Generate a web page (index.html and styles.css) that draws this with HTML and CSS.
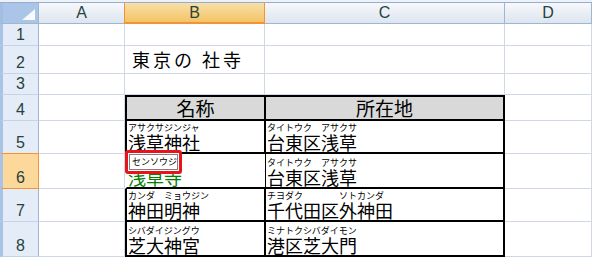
FILE: index.html
```html
<!DOCTYPE html>
<html lang="ja">
<head>
    <meta charset="UTF-8">
    <title>東京の社寺</title>
    <link rel="stylesheet" href="styles.css">
</head>
<body>

    <div class="topbar"></div>

    <div class="sheet">
        <!-- column headers -->
        <div class="corner"><div class="tri"></div></div>
        <div class="ch">A</div>
        <div class="ch sel">B</div>
        <div class="ch">C</div>
        <div class="ch">D</div>

        <!-- row 1 -->
        <div class="rh">1</div>
        <div class="c"></div>
        <div class="c"></div>
        <div class="c"></div>
        <div class="c"></div>

        <!-- row 2 -->
        <div class="rh">2</div>
        <div class="c"></div>
        <div class="c title">東京の 社寺</div>
        <div class="c"></div>
        <div class="c"></div>

        <!-- row 3 -->
        <div class="rh">3</div>
        <div class="c"></div>
        <div class="c"></div>
        <div class="c"></div>
        <div class="c"></div>

        <!-- row 4 -->
        <div class="rh">4</div>
        <div class="c"></div>
        <div class="c tb top head">名称</div>
        <div class="c tc top head">所在地</div>
        <div class="c"></div>

        <!-- row 5 -->
        <div class="rh">5</div>
        <div class="c"></div>
        <div class="c tb">
            <div class="tx">
                <span class="w"><span class="rb">アサクサジンジャ</span><span class="kj">浅草神社</span></span>
            </div>
        </div>
        <div class="c tc">
            <div class="tx">
                <span class="w"><span class="rb">タイトウク</span><span class="kj">台東区</span></span>
                <span class="w"><span class="rb">アサクサ</span><span class="kj">浅草</span></span>
            </div>
        </div>
        <div class="c"></div>

        <!-- row 6 (B6 being edited) -->
        <div class="rh rsel">6</div>
        <div class="c"></div>
        <div class="c tb edit">
            <div class="tx">
                <span class="w"><span class="kj green">浅草寺</span></span>
            </div>
            <div class="callout"><div class="phonetic">センソウジ</div></div>
        </div>
        <div class="c tc thin">
            <div class="tx">
                <span class="w"><span class="rb">タイトウク</span><span class="kj">台東区</span></span>
                <span class="w"><span class="rb">アサクサ</span><span class="kj">浅草</span></span>
            </div>
        </div>
        <div class="c"></div>

        <!-- row 7 -->
        <div class="rh">7</div>
        <div class="c"></div>
        <div class="c tb">
            <div class="tx">
                <span class="w"><span class="rb">カンダ</span><span class="kj">神田</span></span>
                <span class="w"><span class="rb">ミョウジン</span><span class="kj">明神</span></span>
            </div>
        </div>
        <div class="c tc">
            <div class="tx">
                <span class="w"><span class="rb">チヨダク</span><span class="kj">千代田区</span></span>
                <span class="w"><span class="rb">ソトカンダ</span><span class="kj">外神田</span></span>
            </div>
        </div>
        <div class="c"></div>

        <!-- row 8 -->
        <div class="rh">8</div>
        <div class="c"></div>
        <div class="c tb">
            <div class="tx">
                <span class="w"><span class="rb">シバダイジングウ</span><span class="kj">芝大神宮</span></span>
            </div>
        </div>
        <div class="c tc">
            <div class="tx">
                <span class="w"><span class="rb">ミナトク</span><span class="kj">港区</span></span>
                <span class="w"><span class="rb">シバダイモン</span><span class="kj">芝大門</span></span>
            </div>
        </div>
        <div class="c"></div>
    </div>

</body>
</html>
```

FILE: styles.css
```css
/* General */
body {
    margin: 0;
    background: #fff;
    font-family: "Noto Sans CJK JP", sans-serif;
    color: #000;
    overflow: hidden;
}

* {
    box-sizing: border-box;
}

/* Strip above the headers */
.topbar {
    height: 3px;
    background: #eef1f6;
    border-bottom: 1px solid #92afd3;
}

/* Grid */
.sheet {
    display: grid;
    grid-template-columns: 39px 86px 140px 240px 87px;
    grid-template-rows: 21px 22px 28px 21px 26px 33px 35px 33px 35px;
}

/* Select-all corner */
.corner {
    background: #abc5e8;
    border-left: 3px solid #a3bee3;
    border-right: 1px solid #9eb6ce;
    border-bottom: 1px solid #9eb6ce;
    display: flex;
    justify-content: flex-end;
    align-items: flex-end;
    padding: 0 3px 3px 0;
}

.tri {
    width: 13px;
    height: 11px;
    background: linear-gradient(135deg, #e8eef6, #ffffff);
    clip-path: polygon(100% 0, 100% 100%, 0 100%);
}

/* Column headers */
.ch {
    background: linear-gradient(#f6f8fb, #dde5f0);
    border-right: 1px solid #9eb6ce;
    border-bottom: 1px solid #9eb6ce;
    font-family: "Liberation Sans", sans-serif;
    font-size: 16px;
    color: #27413e;
    text-align: center;
    line-height: 20px;
}

.ch.sel {
    background: linear-gradient(#f9dfa8, #f3c466);
    border-left: 1px solid #f29436;
    border-right: 1px solid #f29436;
    border-bottom: 2px solid #f29436;
    margin-left: -1px;
}

/* Row headers */
.rh {
    background: #e4ecf7;
    border-left: 3px solid #a9c3e6;
    border-right: 1px solid #9eb6ce;
    border-bottom: 1px solid #c5d3e6;
    font-family: "Liberation Sans", sans-serif;
    font-size: 16px;
    color: #27413e;
    display: flex;
    justify-content: center;
    align-items: flex-end;
    padding-bottom: 1px;
}

.rh.rsel {
    background: #fdd89b;
    border-right: 1px solid #f29436;
    border-bottom: 1px solid #f29436;
    border-top: 1px solid #f29436;
    margin-top: -1px;
}

/* Cells */
.c {
    border-right: 1px solid #d0d7e5;
    border-bottom: 1px solid #d0d7e5;
}

.title {
    font-size: 18px;
    letter-spacing: 3px;
    padding-left: 7px;
    display: flex;
    align-items: flex-end;
    padding-bottom: 1px;
}

/* Table */
.tb {
    border-left: 2px solid #000;
    border-right: 1px solid #000;
    border-bottom: 2px solid #000;
}

.tc {
    border-left: 1px solid #000;
    border-right: 2px solid #000;
    border-bottom: 2px solid #000;
}

.top {
    border-top: 2px solid #000;
}

.head {
    background: #d9d9d9;
    font-size: 19px;
    line-height: 21px;
    text-align: center;
}

.tx {
    height: 100%;
    display: flex;
    align-items: flex-end;
    padding-left: 1px;
}

.w {
    display: flex;
    flex-direction: column;
}

.rb {
    font-size: 9px;
    line-height: 11px;
    white-space: nowrap;
}

.kj {
    font-size: 18px;
    line-height: 19px;
    white-space: nowrap;
}

.green {
    color: #008000;
}

/* B6 in edit mode */
.edit {
    position: relative;
    border-left-color: #fff;
    border-right: 0;
}

.thin {
    border-left: 1px solid #000;
}

.callout {
    position: absolute;
    left: -2px;
    top: -4px;
    width: 57px;
    height: 24px;
    border: 3px solid #e8141b;
    border-radius: 3px;
    padding: 1px;
    background: #fff;
}

.phonetic {
    height: 100%;
    border: 1px solid #808080;
    font-size: 9px;
    line-height: 14px;
    padding-left: 2px;
    white-space: nowrap;
}
```
